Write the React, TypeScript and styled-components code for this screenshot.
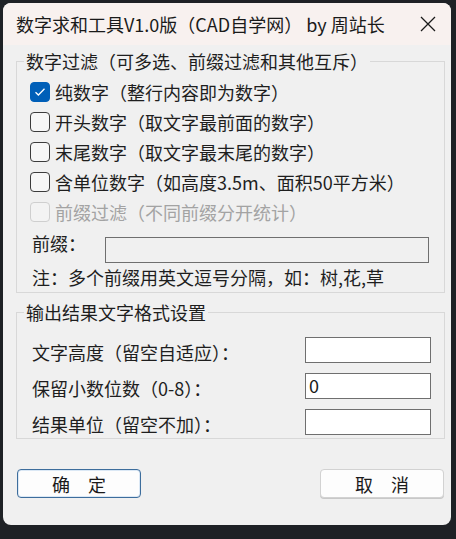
import React from "react";
import styled, { createGlobalStyle } from "styled-components";

const Global = createGlobalStyle`
  html, body { margin: 0; padding: 0; background: #1e2125; }
  body { font-family: "Noto Sans CJK SC", "Noto Sans", sans-serif; }
  * { box-sizing: border-box; }
`;

const Page = styled.div`
  width: 456px;
  height: 539px;
  padding: 3px 0 0 3px;
  background: #1e2125;
  overflow: hidden;
`;

const Dialog = styled.div`
  width: 448px;
  height: 522px;
  border-radius: 8px;
  overflow: hidden;
  background: #f0f0f0;
  display: flex;
  flex-direction: column;
`;

const TitleBar = styled.div`
  height: 42px;
  flex: none;
  display: flex;
  align-items: center;
  padding-left: 13px;
  background: #f8f1ef;
`;

const Title = styled.div`
  flex: 1;
  font-size: 18px;
  line-height: 24px;
  color: #1a1a1a;
  white-space: nowrap;
`;

const CloseBtn = styled.div`
  width: 46px;
  height: 42px;
  display: flex;
  align-items: center;
  justify-content: center;
`;

const Content = styled.div`
  padding: 0 6px 0 13px;
  display: flex;
  flex-direction: column;
`;

const Group = styled.fieldset<{ $top: number }>`
  margin: ${(p) => p.$top}px 0 0 0;
  padding: 0;
  min-width: 0;
  border: 1px solid #d8d8d8;
  border-radius: 0;
`;

const Legend = styled.legend`
  margin-left: 7px;
  padding: 0 2px;
  font-size: 18px;
  line-height: 24px;
  color: #1e1e1e;
`;

const FilterBody = styled.div`
  padding: 4px 0 3px 13px;
  display: flex;
  flex-direction: column;
`;

const CheckRow = styled.div<{ $disabled?: boolean }>`
  height: 30px;
  display: flex;
  align-items: center;
  gap: 5px;
  font-size: 18px;
  color: ${(p) => (p.$disabled ? "#a3a3a3" : "#1e1e1e")};
  white-space: nowrap;
`;

const Box = styled.span<{ $checked?: boolean; $disabled?: boolean }>`
  width: 20px;
  height: 20px;
  flex: none;
  border-radius: 4px;
  display: flex;
  align-items: center;
  justify-content: center;
  background: ${(p) => (p.$checked ? "#005fb8" : p.$disabled ? "#f3f3f3" : "#f7f7f7")};
  border: 1px solid
    ${(p) => (p.$checked ? "#005fb8" : p.$disabled ? "#cfcfcf" : "#3c3c3c")};
`;

const PrefixRow = styled.div`
  margin-top: 4px;
  display: flex;
  align-items: flex-start;
`;

const Label = styled.span<{ $width?: number }>`
  flex: none;
  width: ${(p) => (p.$width ? `${p.$width}px` : "auto")};
  font-size: 18px;
  line-height: 24px;
  color: #1e1e1e;
  white-space: nowrap;
`;

const PrefixLabel = styled(Label)`
  margin-left: 2px;
`;

const TextBox = styled.div<{ $width: number; $disabled?: boolean }>`
  width: ${(p) => p.$width}px;
  height: 26px;
  flex: none;
  border: 1px solid #6f6f6f;
  background: ${(p) => (p.$disabled ? "#f0f0f0" : "#ffffff")};
  padding-left: 3px;
  font-size: 18px;
  line-height: 22px;
  color: #1a1a1a;
`;

const PrefixBox = styled(TextBox)`
  margin-top: 6px;
`;

const Note = styled.div`
  margin: 2px 0 0 2px;
  font-size: 18px;
  line-height: 24px;
  color: #1e1e1e;
  white-space: nowrap;
`;

const OutputBody = styled.div`
  padding: 13px 13px 3px 15px;
  display: flex;
  flex-direction: column;
  gap: 10px;
`;

const FieldRow = styled.div`
  height: 26px;
  display: flex;
  align-items: center;
  justify-content: space-between;
`;

const FieldLabel = styled(Label)`
  padding-top: 3px;
`;

const ButtonRow = styled.div`
  margin: 30px 1px 0 1px;
  display: flex;
  justify-content: space-between;
`;

const Button = styled.div<{ $primary?: boolean }>`
  width: 124px;
  height: 29px;
  border-radius: 4px;
  display: flex;
  align-items: center;
  justify-content: center;
  font-size: 18px;
  color: #1a1a1a;
  background: #fdfdfd;
  border: 1px solid ${(p) => (p.$primary ? "#3d6d9c" : "#d2d2d2")};
  box-shadow: ${(p) => (p.$primary ? "inset 0 0 0 1px #dbe8f5" : "0 1px 0 #c8c8c8")};
  white-space: pre;
`;

const Check = () => (
  <svg width="12" height="10" viewBox="0 0 12 10">
    <path d="M1.5 5.2 L4.4 8 L10.5 1.8" fill="none" stroke="#fff" strokeWidth="1.3" />
  </svg>
);

const CloseIcon = () => (
  <svg width="16" height="16" viewBox="0 0 16 16">
    <path d="M1 1 L15 15 M15 1 L1 15" stroke="#1a1a1a" strokeWidth="1.3" fill="none" />
  </svg>
);

const filters = [
  { text: "纯数字（整行内容即为数字）", checked: true },
  { text: "开头数字（取文字最前面的数字）" },
  { text: "末尾数字（取文字最末尾的数字）" },
  { text: "含单位数字（如高度3.5m、面积50平方米）" },
  { text: "前缀过滤（不同前缀分开统计）", disabled: true },
];

const fields = [
  { label: "文字高度（留空自适应）：", value: "" },
  { label: "保留小数位数（0-8）：", value: "0" },
  { label: "结果单位（留空不加）：", value: "" },
];

export default function App() {
  return (
    <>
      <Global />
      <Page>
        <Dialog>
          <TitleBar>
            <Title>数字求和工具V1.0版（CAD自学网） by 周站长</Title>
            <CloseBtn>
              <CloseIcon />
            </CloseBtn>
          </TitleBar>
          <Content>
            <Group $top={4}>
              <Legend>数字过滤（可多选、前缀过滤和其他互斥）</Legend>
              <FilterBody>
                {filters.map((f) => (
                  <CheckRow key={f.text} $disabled={f.disabled}>
                    <Box $checked={f.checked} $disabled={f.disabled}>
                      {f.checked && <Check />}
                    </Box>
                    {f.text}
                  </CheckRow>
                ))}
                <PrefixRow>
                  <PrefixLabel $width={73}>前缀：</PrefixLabel>
                  <PrefixBox $width={324} $disabled />
                </PrefixRow>
                <Note>注：多个前缀用英文逗号分隔，如：树,花,草</Note>
              </FilterBody>
            </Group>
            <Group $top={7}>
              <Legend>输出结果文字格式设置</Legend>
              <OutputBody>
                {fields.map((f) => (
                  <FieldRow key={f.label}>
                    <FieldLabel>{f.label}</FieldLabel>
                    <TextBox $width={126}>{f.value}</TextBox>
                  </FieldRow>
                ))}
              </OutputBody>
            </Group>
            <ButtonRow>
              <Button $primary>{"确　定"}</Button>
              <Button>{"取　消"}</Button>
            </ButtonRow>
          </Content>
        </Dialog>
      </Page>
    </>
  );
}
